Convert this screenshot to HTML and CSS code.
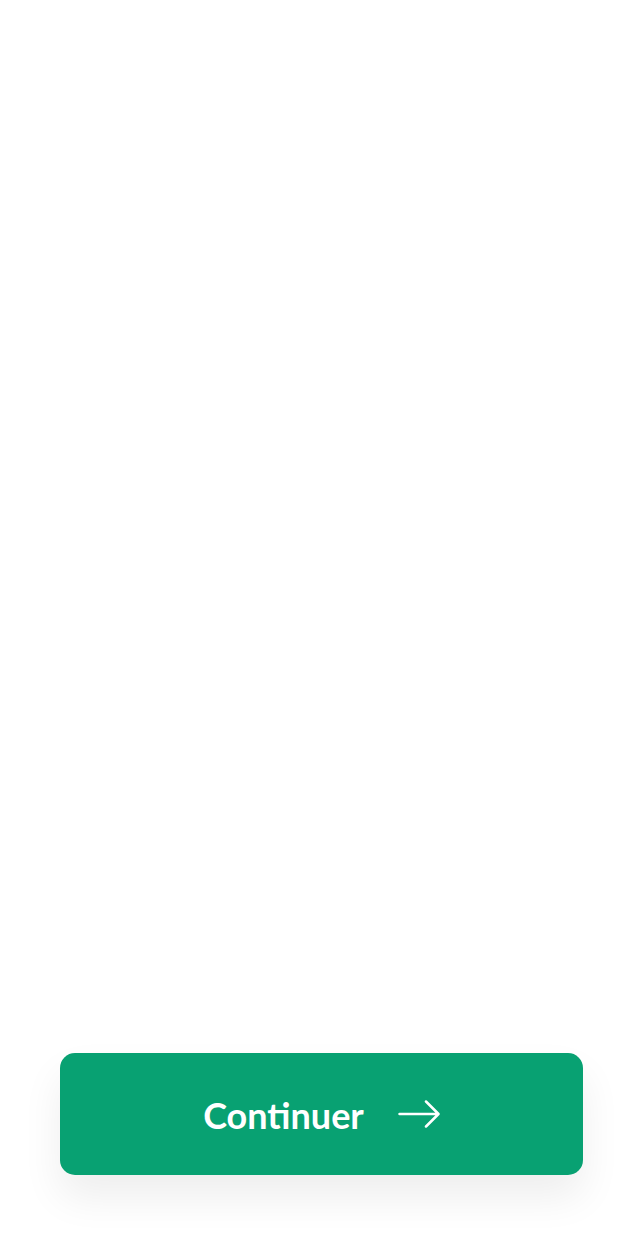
FILE: index.html
```html
<!DOCTYPE html>
<html lang="fr">
<head>
<meta charset="utf-8">
<title>Continuer</title>
<link rel="stylesheet" href="styles.css">
</head>
<body>
<main class="screen">
  <div class="content"></div>
  <footer class="actions">
    <button class="btn-continue" type="button">
      <span class="btn-label">Continuer</span>
      <svg class="btn-arrow" width="42" height="28" viewBox="0 0 42 28" aria-hidden="true">
        <path d="M1.5 14 H40 M28 1.5 L40.5 14 L28 26.5" fill="none" stroke="#ffffff" stroke-width="2.5" stroke-linecap="round" stroke-linejoin="round"/>
      </svg>
    </button>
  </footer>
</main>
</body>
</html>
```

FILE: styles.css
```css
html, body {
  margin: 0;
  padding: 0;
  background: #ffffff;
}

.screen {
  width: 644px;
  height: 1257px;
  display: flex;
  flex-direction: column;
  box-sizing: border-box;
  padding: 0 61px 82px 60px;
  font-family: Lato, "Open Sans", sans-serif;
}

.content {
  flex: 1;
}

.actions {
  display: flex;
}

.btn-continue {
  flex: 1;
  height: 122px;
  border: none;
  border-radius: 15px;
  background: #08a172;
  color: #ffffff;
  display: flex;
  align-items: center;
  justify-content: center;
  gap: 34px;
  padding: 0;
  box-shadow: 0 22px 40px rgba(0, 0, 0, 0.07);
  font-family: Lato, "Open Sans", sans-serif;
  cursor: pointer;
}

.btn-label {
  font-size: 36px;
  font-weight: 700;
  line-height: 1;
  margin-top: 2px;
}

.btn-arrow {
  display: block;
}
```
